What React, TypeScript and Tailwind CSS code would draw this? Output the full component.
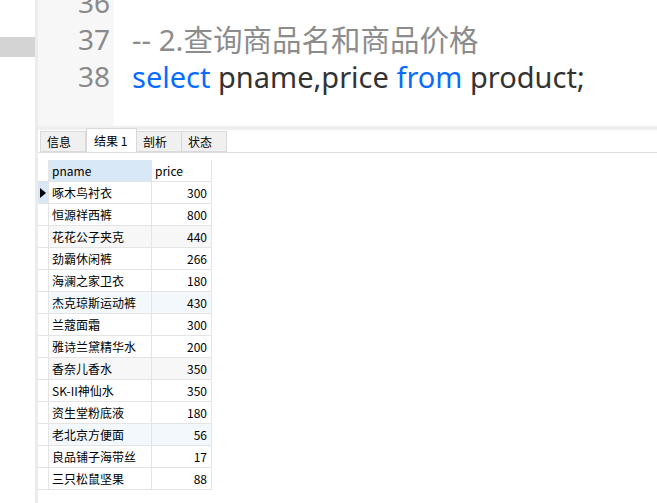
const rows: [string, number, string][] = [
  ['啄木鸟衬衣', 300, ''],
  ['恒源祥西裤', 800, ''],
  ['花花公子夹克', 440, 'bg-[#f7f7f7]'],
  ['劲霸休闲裤', 266, ''],
  ['海澜之家卫衣', 180, ''],
  ['杰克琼斯运动裤', 430, 'bg-[#f3f8fd]'],
  ['兰蔻面霜', 300, ''],
  ['雅诗兰黛精华水', 200, ''],
  ['香奈儿香水', 350, 'bg-[#f7f7f7]'],
  ['SK-II神仙水', 350, ''],
  ['资生堂粉底液', 180, ''],
  ['老北京方便面', 56, 'bg-[#f3f8fd]'],
  ['良品铺子海带丝', 17, ''],
  ['三只松鼠坚果', 88, ''],
]

const uiFont = { fontFamily: '"Noto Sans CJK SC", "Noto Sans", sans-serif' }
const codeFont = { fontFamily: '"Noto Sans", "Noto Sans CJK SC", sans-serif' }

function Tab({ label, active }: { label: string; active?: boolean }) {
  if (active) {
    return (
      <div className="h-[24px] w-[51px] bg-white border border-b-0 border-[#d9d9d9] flex items-center pl-[7px] text-[12px] text-black">
        {label}
      </div>
    )
  }
  return (
    <div className="h-[21px] w-[46px] bg-[#f0f0f0] border border-[#d9d9d9] -ml-px flex items-center pl-[6px] text-[12px] text-black first:ml-0">
      {label}
    </div>
  )
}

export default function App() {
  return (
    <div className="w-[657px] h-[503px] flex bg-white overflow-hidden" style={uiFont}>
      <div className="w-[35px] shrink-0">
        <div className="mt-[37px] h-[20px] bg-[#d4d4d4]" />
      </div>
      <div className="w-[3px] shrink-0 bg-[#ececec]" />
      <div className="flex-1 flex flex-col">
        <div className="h-[126px] flex overflow-hidden">
          <div className="w-[76px] bg-[#f7f7f7] text-right pr-[4px] text-[28px] leading-[37px] text-[#8a8a8a] -mt-[16px]" style={codeFont}>
            <div>36</div>
            <div>37</div>
            <div>38</div>
          </div>
          <div className="flex-1 pl-[18px] text-[29.5px] leading-[37px] -mt-[16px] whitespace-pre" style={codeFont}>
            <div>&nbsp;</div>
            <div className="text-[#8c8c8c]">-- 2.查询商品名和商品价格</div>
            <div className="text-[#333] text-[29px]">
              <span className="text-[#0a6cff]">select</span> pname,price <span className="text-[#0a6cff]">from</span> product;
            </div>
          </div>
        </div>
        <div className="h-[4px] bg-[#efefef]" />
        <div className="flex items-end pl-[2px] border-b border-[#dedede] h-[23px]">
          <Tab label="信息" />
          <Tab label="结果 1" active />
          <Tab label="剖析" />
          <Tab label="状态" />
        </div>
        <div className="mt-[7px] text-[12px] text-black">
          <div className="flex h-[22px]">
            <div className="w-[11px] border-r border-b border-[#e4e4e4]" />
            <div className="w-[103px] bg-[#d9e8f6] border-r border-b border-[#e4e4e4] pl-[3px] flex items-center">pname</div>
            <div className="w-[60px] border-r border-b border-[#e4e4e4] pl-[3px] flex items-center">price</div>
          </div>
          {rows.map(([name, price, bg], i) => (
            <div key={name} className="flex h-[22px]">
              <div className={`w-[11px] border-r border-b border-[#e4e4e4] flex items-center ${i === 0 ? 'bg-[#d9e8f6]' : ''}`}>
                {i === 0 && (
                  <svg width="8" height="10" viewBox="0 0 8 10" className="ml-[1px]">
                    <path d="M1 0 L7 5 L1 10 Z" fill="#000" />
                  </svg>
                )}
              </div>
              <div className={`w-[103px] border-r border-b border-[#e4e4e4] pl-[3px] flex items-center ${bg}`}>{name}</div>
              <div className={`w-[60px] border-r border-b border-[#e4e4e4] pr-[4px] flex items-center justify-end ${bg}`}>{price}</div>
            </div>
          ))}
        </div>
      </div>
    </div>
  )
}
